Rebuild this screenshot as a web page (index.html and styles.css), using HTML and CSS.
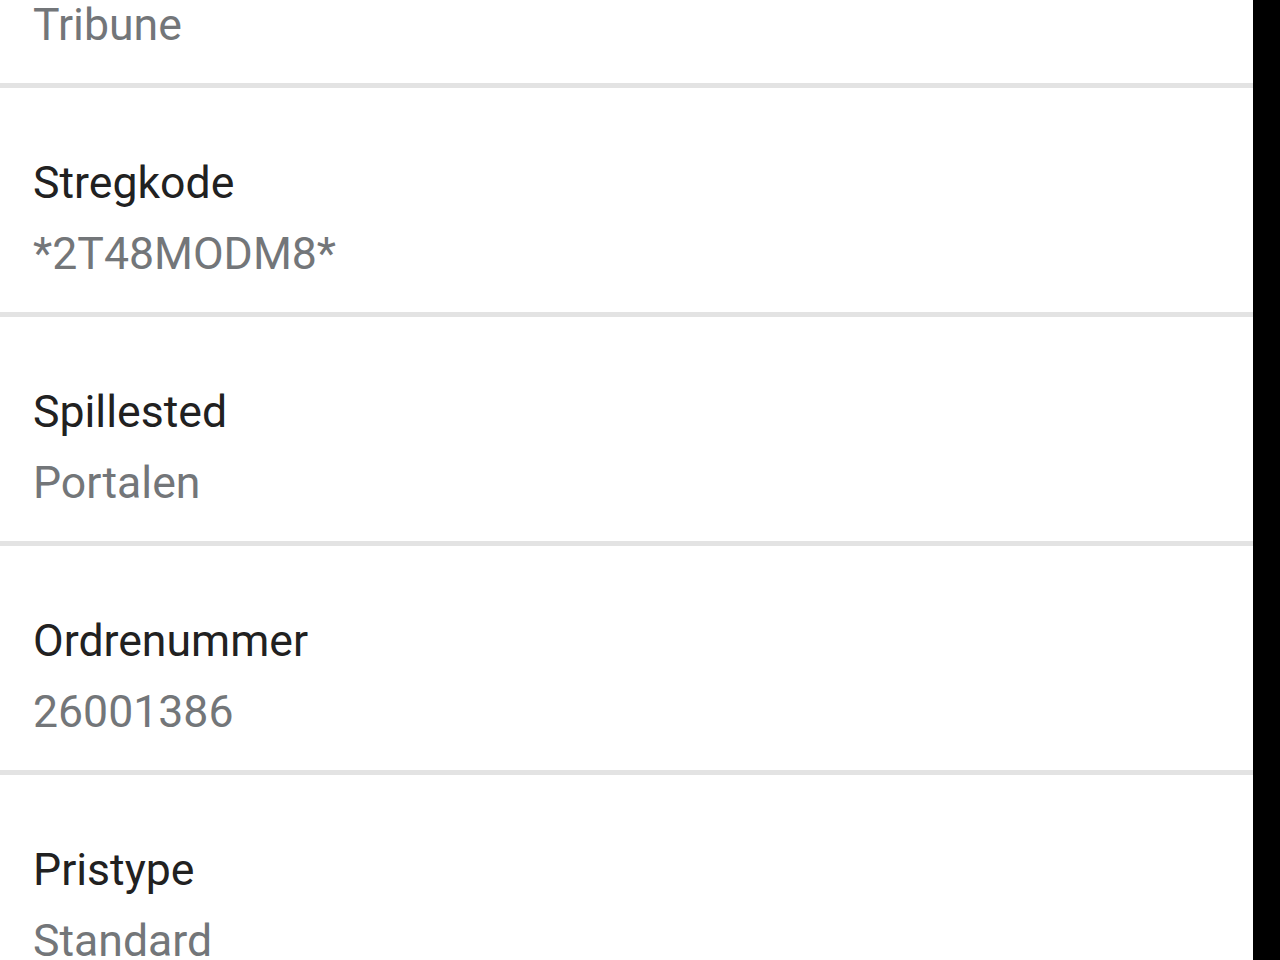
FILE: index.html
```html
<!DOCTYPE html>
<html>
<head>
<meta charset="utf-8">
<link rel="stylesheet" href="styles.css">
</head>
<body>
<div class="page">
  <div class="list">
    <div class="row"><div class="value">Tribune</div></div>
    <div class="row"><div class="label">Stregkode</div><div class="value">*2T48MODM8*</div></div>
    <div class="row"><div class="label">Spillested</div><div class="value">Portalen</div></div>
    <div class="row"><div class="label">Ordrenummer</div><div class="value">26001386</div></div>
    <div class="row"><div class="label">Pristype</div><div class="value">Standard</div></div>
  </div>
  <div class="edge"></div>
</div>
</body>
</html>
```
FILE: styles.css
```css
html, body {
  margin: 0;
  padding: 0;
  height: 100%;
  overflow: hidden;
  background: #000;
}
.page {
  display: flex;
  height: 960px;
  overflow: hidden;
}
.list {
  width: 1253px;
  background: #fff;
  margin-top: -70px;
  font-family: Roboto, "Liberation Sans", sans-serif;
  font-size: 44.6px;
}
.edge {
  flex: 1;
  background: #000;
}
.row {
  padding: 60px 0 22px 33px;
  border-bottom: 5px solid #e3e3e3;
}
.label {
  line-height: 71px;
  color: #212121;
}
.value {
  line-height: 71px;
  color: #737679;
}
```
